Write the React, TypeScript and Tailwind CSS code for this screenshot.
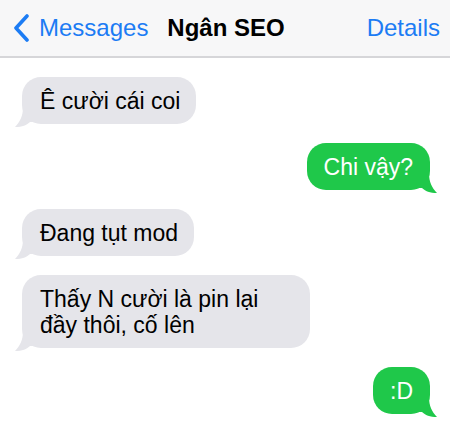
import { ReactNode } from "react";

type Msg = { text: ReactNode; mine?: boolean; wide?: boolean };

const messages: Msg[] = [
  { text: "Ê cười cái coi" },
  { text: "Chi vậy?", mine: true },
  { text: "Đang tụt mod" },
  {
    text: (
      <>
        Thấy N cười là pin lại
        <br />
        đầy thôi, cố lên
      </>
    ),
    wide: true,
  },
  { text: ":D", mine: true },
];

function Tail({ mine }: { mine?: boolean }) {
  return (
    <svg
      width="22"
      height="20"
      viewBox="0 0 22 20"
      className={
        mine
          ? "absolute -right-[8px] bottom-[-3px] -scale-x-100"
          : "absolute -left-[8px] bottom-[-3px]"
      }
    >
      <path
        d="M9 0 C9 9 6 15 1 20 C8 20 13 18 16 15 L22 15 L22 0 Z"
        fill={mine ? "#1fc84a" : "#e5e5ea"}
      />
    </svg>
  );
}

function Bubble({ text, mine, wide }: Msg) {
  return (
    <div className={mine ? "flex justify-end" : "flex justify-start"}>
      <div
        className={
          mine
            ? "relative rounded-[19px] bg-[#1fc84a] px-[17px] py-[10.5px] text-[23px] leading-[26px] text-white"
            : wide
              ? "relative w-[288px] rounded-[19px] bg-[#e5e5ea] pl-[18px] pr-[16px] py-[10.5px] text-[23px] leading-[26px] text-black"
              : "relative rounded-[19px] bg-[#e5e5ea] pl-[18px] pr-[16px] py-[10.5px] text-[23px] leading-[26px] text-black"
        }
      >
        <Tail mine={mine} />
        <span className="relative">{text}</span>
      </div>
    </div>
  );
}

export default function App() {
  return (
    <div className="h-[426px] w-[450px] overflow-hidden bg-white font-['Liberation_Sans',Arial,sans-serif]">
      <header className="grid h-[58px] grid-cols-[1fr_auto_1fr] items-center border-b-2 border-[#d6d6d9] bg-[#f7f7f8] pl-[12px] pr-[10px] text-[24px]">
        <div className="flex items-center gap-[9px] text-[#1c7cf4]">
          <svg width="18" height="28" viewBox="0 0 18 28">
            <path
              d="M15 2 L4 14 L15 26"
              fill="none"
              stroke="#1c7cf4"
              strokeWidth="3.6"
              strokeLinecap="round"
              strokeLinejoin="round"
            />
          </svg>
          <span>Messages</span>
        </div>
        <span className="font-bold text-black">Ngân SEO</span>
        <span className="justify-self-end text-[#1c7cf4]">Details</span>
      </header>
      <div className="flex flex-col gap-[19px] pl-[22px] pr-[20px] pt-[19px]">
        {messages.map((m, i) => (
          <Bubble key={i} text={m.text} mine={m.mine} wide={m.wide} />
        ))}
      </div>
    </div>
  );
}
